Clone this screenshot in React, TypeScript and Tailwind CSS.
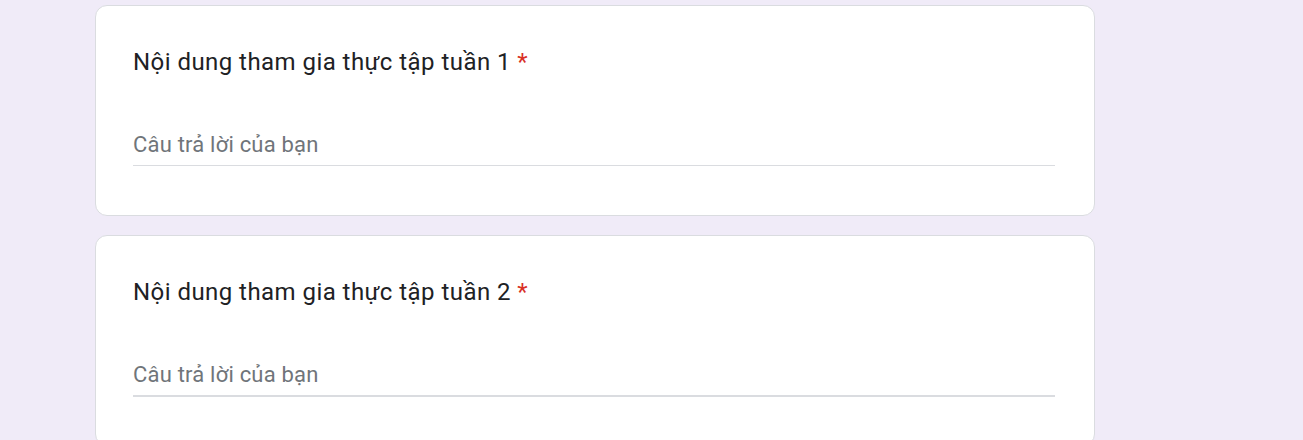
export default function App() {
  const questions = ['Nội dung tham gia thực tập tuần 1', 'Nội dung tham gia thực tập tuần 2'];

  return (
    <div className="min-h-screen bg-[#f0ebf8] pt-[5px] pl-[95px] font-['Roboto',sans-serif]">
      <div className="flex w-[1000px] flex-col gap-[19px]">
        {questions.map((q, i) => (
          <div
            key={i}
            className="h-[211px] shrink-0 rounded-xl border border-[#dadce0] bg-white pl-[37px] pr-[39px] pt-[40px]"
          >
            <div className="text-[24px] leading-[32px] tracking-[0.45px] text-[#202124]">
              {q} <span className="text-[#d93025]">*</span>
            </div>
            <div
              className={
                i === 0
                  ? 'mt-[54px] border-b border-[#dadce0] pb-[7px] text-[22px] leading-[26px] tracking-[0.2px] text-[#70757a]'
                  : 'mt-[54px] border-b-2 border-[#dadce0] pb-[7px] text-[22px] leading-[26px] tracking-[0.2px] text-[#70757a]'
              }
            >
              Câu trả lời của bạn
            </div>
          </div>
        ))}
      </div>
    </div>
  );
}
